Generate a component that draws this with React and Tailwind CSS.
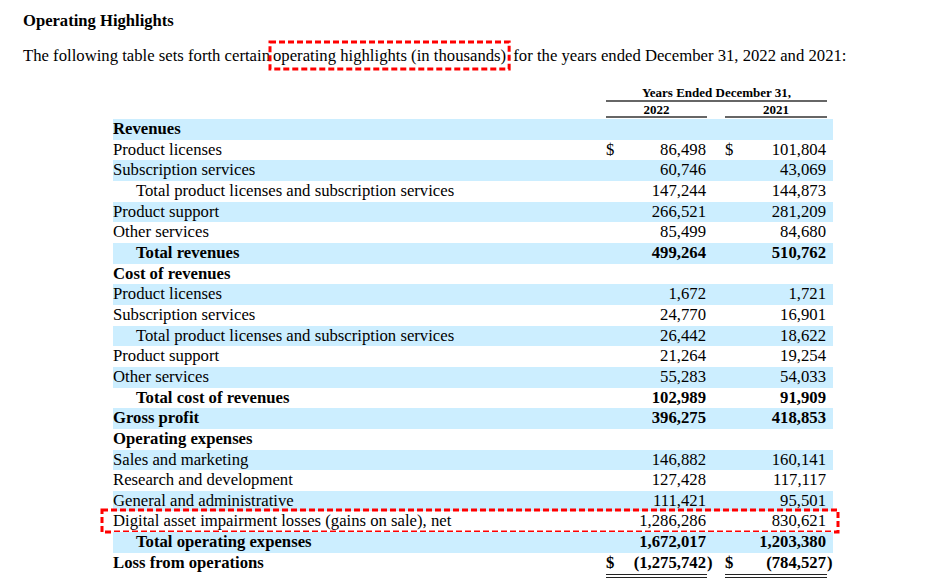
import React from 'react';

const ROWS = [
  { label: 'Revenues', bold: true },
  { label: 'Product licenses', a: '86,498', b: '101,804', dollar: true },
  { label: 'Subscription services', a: '60,746', b: '43,069', line: true },
  { label: 'Total product licenses and subscription services', indent: true, a: '147,244', b: '144,873', line: true },
  { label: 'Product support', a: '266,521', b: '281,209' },
  { label: 'Other services', a: '85,499', b: '84,680', line: true },
  { label: 'Total revenues', bold: true, indent: true, a: '499,264', b: '510,762', line: true },
  { label: 'Cost of revenues', bold: true },
  { label: 'Product licenses', a: '1,672', b: '1,721' },
  { label: 'Subscription services', a: '24,770', b: '16,901', line: true },
  { label: 'Total product licenses and subscription services', indent: true, a: '26,442', b: '18,622', line: true },
  { label: 'Product support', a: '21,264', b: '19,254' },
  { label: 'Other services', a: '55,283', b: '54,033', line: true },
  { label: 'Total cost of revenues', bold: true, indent: true, a: '102,989', b: '91,909', line: true },
  { label: 'Gross profit', bold: true, a: '396,275', b: '418,853', line: true },
  { label: 'Operating expenses', bold: true },
  { label: 'Sales and marketing', a: '146,882', b: '160,141' },
  { label: 'Research and development', a: '127,428', b: '117,117' },
  { label: 'General and administrative', a: '111,421', b: '95,501' },
  { label: 'Digital asset impairment losses (gains on sale), net', a: '1,286,286', b: '830,621', line: true, marked: true },
  { label: 'Total operating expenses', bold: true, indent: true, a: '1,672,017', b: '1,203,380', line: true },
  { label: 'Loss from operations', bold: true, a: '(1,275,742', b: '(784,527', dollar: true, paren: true, double: true },
];

// red dashed annotation drawn over the text
function Marker({ className }) {
  return (
    <svg className={`absolute overflow-visible pointer-events-none ${className}`}>
      <rect x="0" y="0" width="100%" height="100%" fill="none" stroke="#ff0000" strokeWidth="3" strokeDasharray="6 3" />
    </svg>
  );
}

function NumCell({ dollar, value, line, double, bold }) {
  const border = double
    ? 'border-b-[4px] border-double border-[#222]'
    : line
    ? 'border-b border-[#222]'
    : '';
  return (
    <div className={`flex items-start justify-between pr-[1px] ${border} ${bold ? 'font-bold' : ''}`}>
      <span>{dollar ? '$' : ''}</span>
      <span>{value}</span>
    </div>
  );
}

function Row({ row, i }) {
  const shade = i % 2 === 0 ? 'bg-[#cceeff]' : 'bg-white';
  const height = row.double ? 'h-[25px]' : 'h-[20.67px]';
  return (
    <div className={`relative grid grid-cols-[493px_101px_18px_102px_6px] leading-[20.67px] ${height} ${shade}`}>
      <div className={`whitespace-nowrap ${row.indent ? 'pl-[23px]' : ''} ${row.bold ? 'font-bold' : ''}`}>{row.label}</div>
      <NumCell dollar={row.dollar} value={row.a} line={row.line} double={row.double} bold={row.bold} />
      <div className={`${row.bold ? 'font-bold' : ''}`}>{row.paren ? ')' : ''}</div>
      <NumCell dollar={row.dollar} value={row.b} line={row.line} double={row.double} bold={row.bold} />
      <div className={`${row.bold ? 'font-bold' : ''}`}>{row.paren ? ')' : ''}</div>
      {row.marked && <Marker className="left-[-11.5px] top-[-1.5px] w-[736px] h-[22px]" />}
    </div>
  );
}

export default function App() {
  return (
    <div className="w-[934px] h-[587px] bg-white text-black font-['Liberation_Serif',serif] overflow-hidden">
      <div className="pl-[23px] pt-[11px]">
        <h1 className="text-[16.6px] font-bold leading-[20px]">Operating Highlights</h1>
        <p className="mt-[15px] text-[16.7px] leading-[20px] whitespace-nowrap">
          The following table sets forth certain
          <span className="relative px-[3px]">
            operating highlights (in thousands)
            <Marker className="left-0 top-[-4.5px] w-full h-[27px]" />
          </span>
          {' '}for the years ended December 31, 2022 and 2021:
        </p>
      </div>

      <div className="ml-[113px] mt-[17px] w-[720px] text-[16.7px]">
        <div className="grid grid-cols-[493px_101px_18px_102px_6px] text-[13px] font-bold">
          <div />
          <div className="col-span-3 text-center border-b-2 border-[#666] pt-[2px] leading-[15px]">Years Ended December 31,</div>
          <div />
          <div />
          <div className="text-center border-b-2 border-[#666] pt-[2px] leading-[12px]">2022</div>
          <div />
          <div className="text-center border-b-2 border-[#666] pt-[2px] leading-[12px]">2021</div>
          <div />
        </div>
        <div className="mt-[1px]">
          {ROWS.map((row, i) => (
            <Row key={i} row={row} i={i} />
          ))}
        </div>
      </div>
    </div>
  );
}
